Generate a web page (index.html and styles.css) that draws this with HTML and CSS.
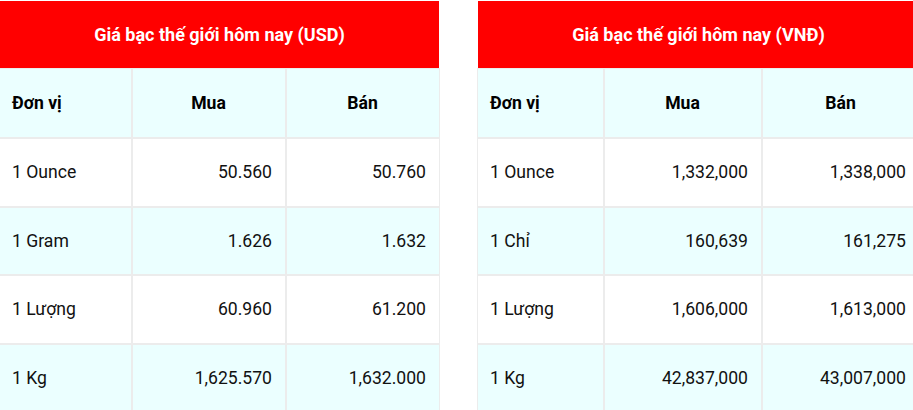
FILE: index.html
```html
<!DOCTYPE html>
<html lang="vi">
<head>
<meta charset="utf-8">
<title>Giá bạc thế giới hôm nay</title>
<link rel="stylesheet" href="styles.css">
</head>
<body>
<div class="page">
  <section class="block block-usd">
    <div class="title">Giá bạc thế giới hôm nay (USD)</div>
    <table class="price">
      <colgroup><col class="c1"><col class="c2"><col class="c3"></colgroup>
      <thead>
        <tr><th class="unit">Đơn vị</th><th>Mua</th><th>Bán</th></tr>
      </thead>
      <tbody>
        <tr><td class="unit">1 Ounce</td><td>50.560</td><td>50.760</td></tr>
        <tr class="alt"><td class="unit">1 Gram</td><td>1.626</td><td>1.632</td></tr>
        <tr><td class="unit">1 Lượng</td><td>60.960</td><td>61.200</td></tr>
        <tr class="alt"><td class="unit">1 Kg</td><td>1,625.570</td><td>1,632.000</td></tr>
      </tbody>
    </table>
  </section>
  <section class="block block-vnd">
    <div class="title">Giá bạc thế giới hôm nay (VNĐ)</div>
    <table class="price">
      <colgroup><col class="c1"><col class="c2"><col class="c3"></colgroup>
      <thead>
        <tr><th class="unit">Đơn vị</th><th>Mua</th><th>Bán</th></tr>
      </thead>
      <tbody>
        <tr><td class="unit">1 Ounce</td><td>1,332,000</td><td>1,338,000</td></tr>
        <tr class="alt"><td class="unit">1 Chỉ</td><td>160,639</td><td>161,275</td></tr>
        <tr><td class="unit">1 Lượng</td><td>1,606,000</td><td>1,613,000</td></tr>
        <tr class="alt"><td class="unit">1 Kg</td><td>42,837,000</td><td>43,007,000</td></tr>
      </tbody>
    </table>
  </section>
</div>
</body>
</html>
```

FILE: styles.css
```css
html, body {
  margin: 0;
  padding: 0;
  background: #fff;
  overflow: hidden;
}
body {
  font-family: Roboto, "Noto Sans", Arial, sans-serif;
  color: #111;
}
.page {
  display: flex;
  gap: 37px;
  margin: 1px 0 0 -1px;
  width: 1000px;
}
.block {
  flex: none;
}
.block-usd { width: 441px; }
.block-vnd { width: 443px; }
.title {
  margin: 0 1px;
  height: 67px;
  background: #ff0000;
  color: #fff;
  font-weight: 700;
  font-size: 18px;
  display: flex;
  align-items: center;
  justify-content: center;
}
.price {
  width: 100%;
  table-layout: fixed;
  border-collapse: separate;
  border-spacing: 0;
  font-size: 17.6px;
}
.block-usd .c1 { width: 133px; }
.block-usd .c2 { width: 154px; }
.block-usd .c3 { width: 154px; }
.block-vnd .c1 { width: 127px; }
.block-vnd .c2 { width: 158px; }
.block-vnd .c3 { width: 158px; }
.price th,
.price td {
  border: 1px solid #ececec;
  padding: 23px 13px 23px 12px;
  line-height: 20.67px;
  height: 20.67px;
  white-space: nowrap;
}
.price th {
  background: #ebffff;
  color: #000;
  font-weight: 700;
  text-align: center;
  line-height: 22px;
  height: 22px;
}
.price td {
  text-align: right;
  padding-right: 13px;
}
.price .unit {
  text-align: left;
}
.price tr.alt td {
  background: #ebffff;
}
```
